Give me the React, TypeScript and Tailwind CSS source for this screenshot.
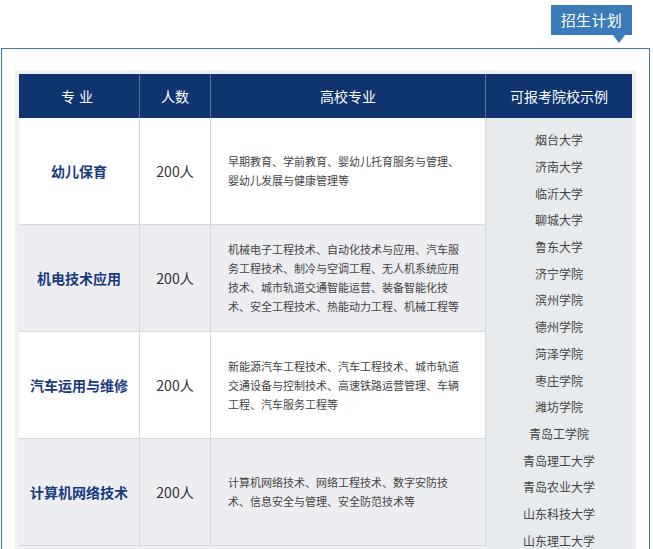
const F = { fontFamily: '"Noto Sans CJK SC", "Noto Sans", sans-serif' };

const rows = [
  { name: "幼儿保育", desc: "早期教育、学前教育、婴幼儿托育服务与管理、婴幼儿发展与健康管理等", bg: "bg-white" },
  { name: "机电技术应用", desc: "机械电子工程技术、自动化技术与应用、汽车服务工程技术、制冷与空调工程、无人机系统应用技术、城市轨道交通智能运营、装备智能化技术、安全工程技术、热能动力工程、机械工程等", bg: "bg-[#eceef1]" },
  { name: "汽车运用与维修", desc: "新能源汽车工程技术、汽车工程技术、城市轨道交通设备与控制技术、高速铁路运营管理、车辆工程、汽车服务工程等", bg: "bg-white" },
  { name: "计算机网络技术", desc: "计算机网络技术、网络工程技术、数字安防技术、信息安全与管理、安全防范技术等", bg: "bg-[#eceef1]" },
];

const schools = ["烟台大学", "济南大学", "临沂大学", "聊城大学", "鲁东大学", "济宁学院", "滨州学院", "德州学院", "菏泽学院", "枣庄学院", "潍坊学院", "青岛工学院", "青岛理工大学", "青岛农业大学", "山东科技大学", "山东理工大学"];

export default function App() {
  return (
    <div className="w-[653px] h-[549px] overflow-hidden bg-white relative" style={F}>
      <div className="flex justify-end pr-[21px] pt-[5px] h-[48px]">
        <div className="relative">
          <div className="bg-[#3a7bb8] text-white text-[15px] h-[30px] w-[81px] flex items-center justify-center tracking-wide">招生计划</div>
          <div className="absolute left-[62px] top-[30px] w-0 h-0 border-l-[6px] border-r-[6px] border-t-[8px] border-l-transparent border-r-transparent border-t-[#3a7bb8]" />
        </div>
      </div>
      <div className="mx-[1px] w-[649px] border-[1.5px] border-[#3f7bb0] h-[520px] pt-[21px] px-[13px]">
        <div className="bg-[#eef0f3] p-[4px] pb-0 h-[500px]">
          <div className="grid grid-cols-[121px_71px_275px_146px] text-[#333]">
            <div className="h-[44px] bg-[#0f3470] text-white text-[14px] flex items-center justify-center border-r border-[#5a7299] tracking-[4px]">专业</div>
            <div className="h-[44px] bg-[#0f3470] text-white text-[14px] flex items-center justify-center border-r border-[#5a7299]">人数</div>
            <div className="h-[44px] bg-[#0f3470] text-white text-[14px] flex items-center justify-center border-r border-[#5a7299]">高校专业</div>
            <div className="h-[44px] bg-[#0f3470] text-white text-[14px] flex items-center justify-center">可报考院校示例</div>
            <div className="col-span-3 flex flex-col">
              {rows.map((r) => (
                <div key={r.name} className={`grid grid-cols-[121px_71px_275px] h-[107px] border-b border-[#d6d9de] ${r.bg}`}>
                  <div className="flex items-center justify-center text-[#173a80] font-bold text-[14px] border-r border-[#d6d9de]">{r.name}</div>
                  <div className="flex items-center justify-center text-[14px] border-r border-[#d6d9de]">200人</div>
                  <div className="flex items-center px-[17px] text-[11px] leading-[19px] text-[#444] border-r border-[#d6d9de]">{r.desc}</div>
                </div>
              ))}
            </div>
            <div className="bg-[#e8ebee] flex flex-col items-center pt-[9px] text-[12px] text-[#444]">
              {schools.map((s) => (
                <div key={s} className="h-[26.7px] flex items-center">{s}</div>
              ))}
            </div>
          </div>
        </div>
      </div>
    </div>
  );
}
